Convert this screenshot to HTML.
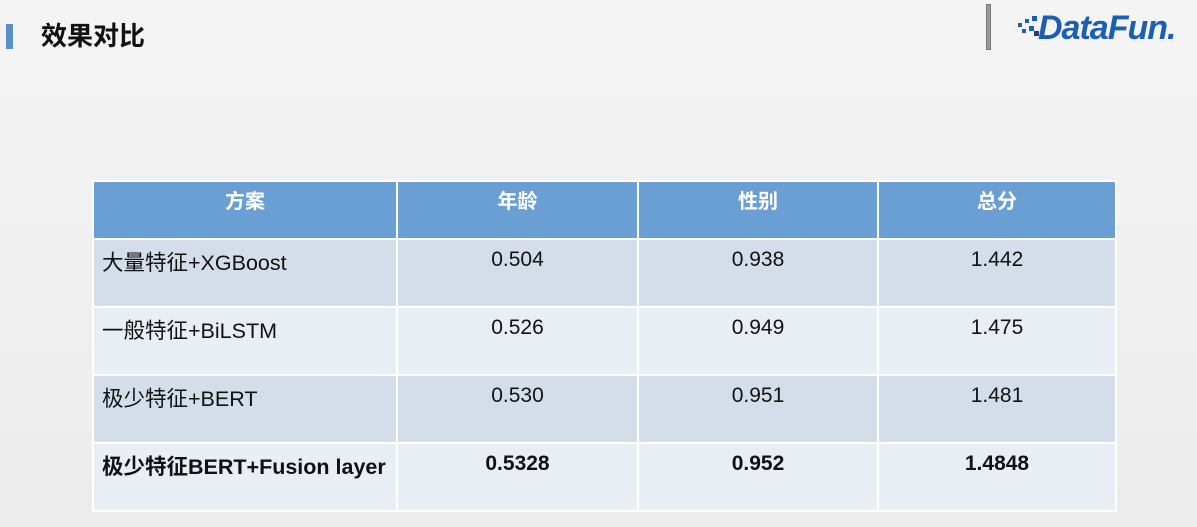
<!DOCTYPE html>
<html><head><meta charset="utf-8"><style>
body{margin:0;width:1197px;height:527px;background:linear-gradient(#f4f4f4,#ececec);position:relative;overflow:hidden;font-family:"Liberation Sans","Noto Sans CJK SC",sans-serif}
.bar{position:absolute;left:6px;top:24px;width:7px;height:25px;background:#5b8fc9}
.title{position:absolute;left:41px;top:21px;font-size:26px;font-weight:bold;color:#111;line-height:30px}
.vl{position:absolute;left:986px;top:4px;width:3px;height:44px;background:#999;border:1px solid #777}
.logo{position:absolute;left:1038px;top:8px;font-size:34px;font-style:italic;font-weight:bold;color:#1a5fb4;letter-spacing:-1px;line-height:40px}
.dots{position:absolute;left:1016px;top:16px}
table{position:absolute;left:92px;top:180px;width:1025px;border-collapse:collapse;table-layout:fixed}
td,th{border:2px solid #fff;font-size:21px;color:#111;box-sizing:border-box}
th{background:#6a9fd4;color:#fff;height:58px;font-size:20px;vertical-align:top;padding-top:3px}
td{height:68px;text-align:center;vertical-align:top;padding-top:8px}
td:first-child{text-align:left;padding-left:8px;font-size:21.5px;padding-top:6px}
tr.a td{background:#d4deea}
tr.b td{background:#e9eef5}
tr.c td{font-weight:bold}
</style></head><body>
<div class="bar"></div><div class="title">效果对比</div>
<div class="vl"></div>
<svg class="dots" width="24" height="22" viewBox="0 0 24 22" fill="#1a5fb4"><rect x="2" y="7" width="4" height="4"/><rect x="9" y="3" width="4" height="4"/><rect x="16" y="0" width="5" height="5"/><rect x="6" y="13" width="4" height="4"/><rect x="13" y="10" width="5" height="5"/><rect x="18" y="15" width="5" height="5" fill="#2a3a6a"/></svg>
<div class="logo">DataFun.</div>
<table>
<colgroup><col style="width:304px"><col style="width:241px"><col style="width:240px"><col></colgroup>
<tr><th>方案</th><th>年龄</th><th>性别</th><th>总分</th></tr>
<tr class="a"><td>大量特征+XGBoost</td><td>0.504</td><td>0.938</td><td>1.442</td></tr>
<tr class="b"><td>一般特征+BiLSTM</td><td>0.526</td><td>0.949</td><td>1.475</td></tr>
<tr class="a"><td>极少特征+BERT</td><td>0.530</td><td>0.951</td><td>1.481</td></tr>
<tr class="b c"><td>极少特征BERT+Fusion layer</td><td>0.5328</td><td>0.952</td><td>1.4848</td></tr>
</table>
</body></html>
